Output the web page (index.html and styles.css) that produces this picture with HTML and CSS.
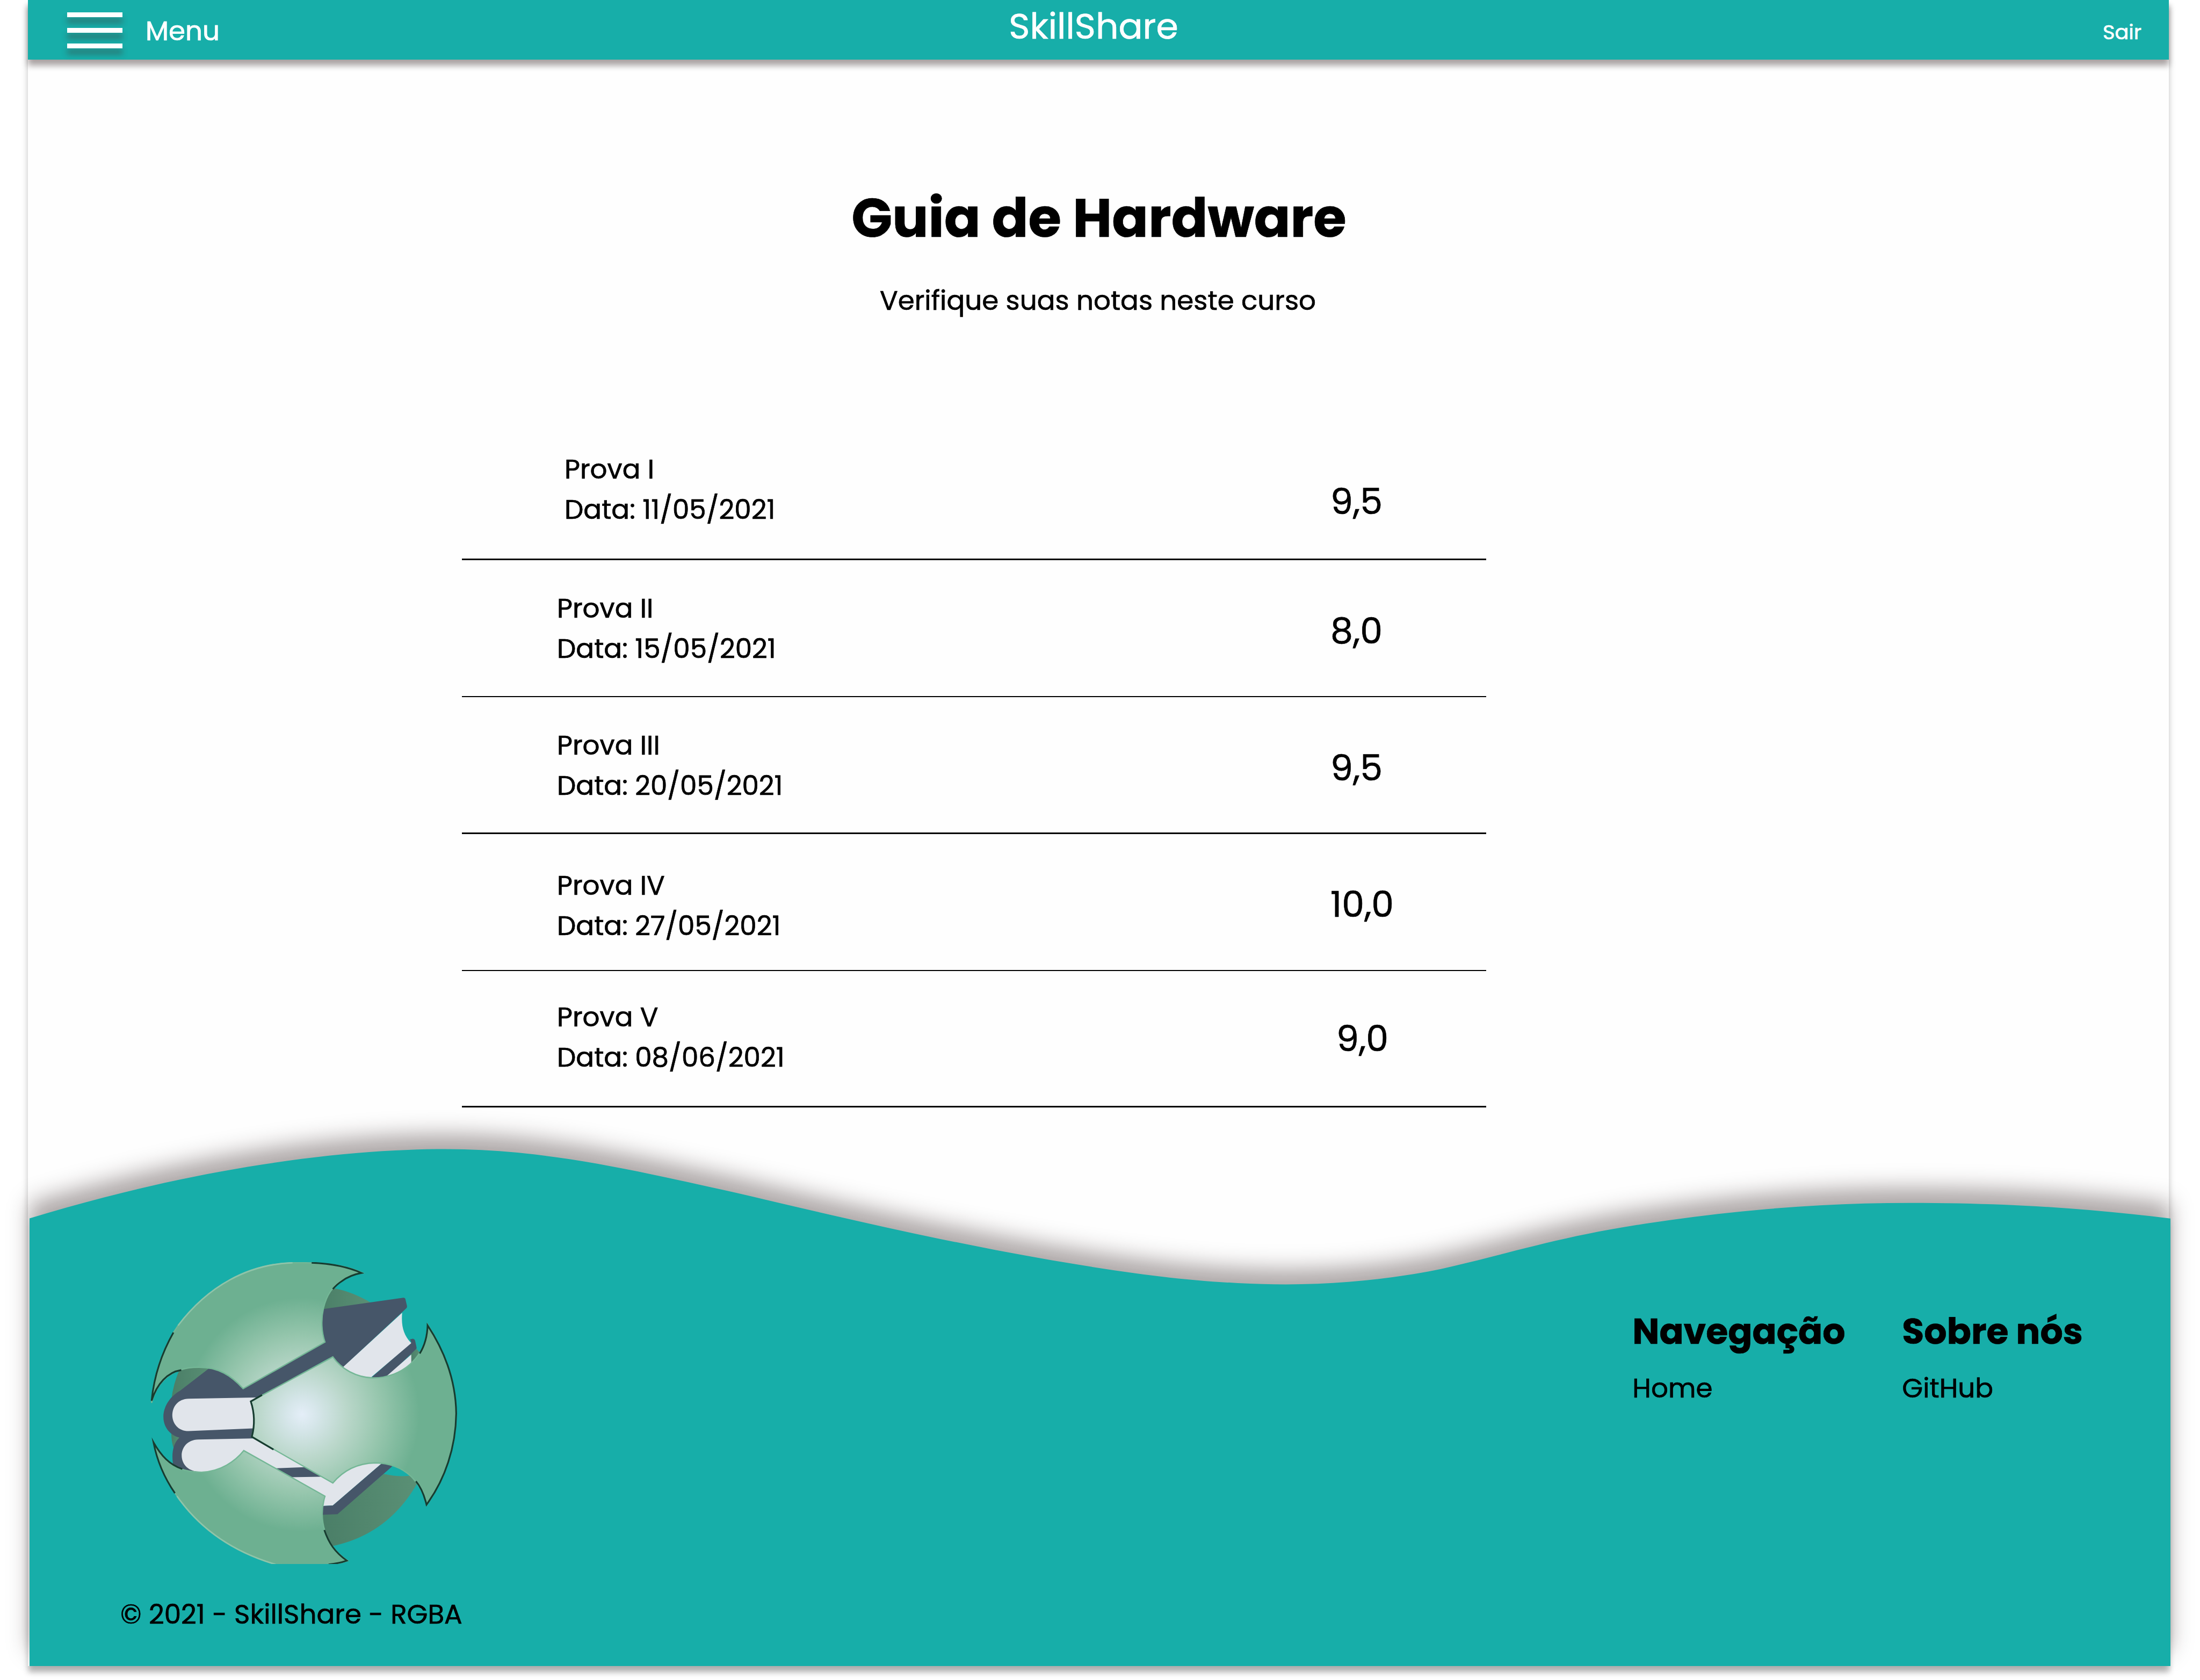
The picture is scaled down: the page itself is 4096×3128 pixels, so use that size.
FILE: index.html
```
<!DOCTYPE html>
<html lang="pt-BR">
<head>
<meta charset="utf-8">
<title>SkillShare - Guia de Hardware</title>
<link rel="stylesheet" href="styles.css">
</head>
<body>
<div class="page">
  <header class="topbar">
    <div class="menu">
      <span class="burger"><i></i><i></i><i></i></span>
      <span class="menu-label">Menu</span>
    </div>
    <div class="brand">SkillShare</div>
    <a class="logout">Sair</a>
  </header>

  <main class="content">
    <h1 class="title">Guia de Hardware</h1>
    <p class="subtitle">Verifique suas notas neste curso</p>
    <section class="grades">
      <div class="exam exam-1">
        <div class="info"><p>Prova I</p><p>Data: 11/05/2021</p></div>
        <div class="grade">9,5</div>
      </div>
      <div class="exam exam-2">
        <div class="info"><p>Prova II</p><p>Data: 15/05/2021</p></div>
        <div class="grade">8,0</div>
      </div>
      <div class="exam exam-3">
        <div class="info"><p>Prova III</p><p>Data: 20/05/2021</p></div>
        <div class="grade">9,5</div>
      </div>
      <div class="exam exam-4">
        <div class="info"><p>Prova IV</p><p>Data: 27/05/2021</p></div>
        <div class="grade">10,0</div>
      </div>
      <div class="exam exam-5">
        <div class="info"><p>Prova V</p><p>Data: 08/06/2021</p></div>
        <div class="grade">9,0</div>
      </div>
    </section>
  </main>

  <footer class="footer">
    <svg class="wave" viewBox="55 2063 3986 1039" aria-hidden="true">
      <path fill="#17aea9" d="M55,2268.6 C320,2187 600,2139.5 830,2139.5 C1010,2139.5 1170,2176 1371,2221 C1600,2275 1860,2336 2112,2370.4 C2210,2384 2310,2391.5 2394,2391.5 C2500,2391.5 2600,2380 2684,2362.6 C2785,2340 2890,2307 3019,2285.5 C3195,2256 3370,2239.8 3557,2239.8 C3740,2239.8 3890,2250 4041,2268.8 V3102 H55 Z"/>
    </svg>
    <div class="about">
      <svg class="logo" viewBox="60 86 1448 1424" aria-hidden="true">
        <defs>
          <radialGradient id="leaf" gradientUnits="userSpaceOnUse" cx="775" cy="805" r="600">
            <stop offset="0" stop-color="#e4eef8"/>
            <stop offset=".12" stop-color="#d6e6ea"/>
            <stop offset=".35" stop-color="#bad7ca"/>
            <stop offset=".62" stop-color="#96c6ad"/>
            <stop offset=".92" stop-color="#6db091"/>
          </radialGradient>
          <linearGradient id="deep" x1="0" y1="0" x2="1" y2="0">
            <stop offset="0" stop-color="#4a7e67"/>
            <stop offset="1" stop-color="#5a9075"/>
          </linearGradient>
        </defs>
        <g fill="url(#deep)">
          <path d="M900,205 L930,210 Q1010,225 1100,277 L860,312Z"/>
          <path d="M200,585 L360,585 L220,720 L158,740 Q166,660 200,585Z"/>
          <path d="M158,890 L210,905 L175,975 L166,955 Q158,925 158,890Z"/>
          <path d="M1160,1085 Q1225,1100 1283,1094 L1318,1130 Q1180,1370 920,1425 L860,1340 L865,1270 L940,1270Z"/>
          <path d="M1285,520 L1315,495 L1335,518 L1285,570Z"/>
        </g>
        <path fill="#465669" d="M850,311 L1252,254 Q1259,253 1262,259 L1270,293 Q1271,300 1265,305 L960,590 L900,540 L590,712 L560,730 L540,920 L300,1100 H212 L166,1038 C158,985 168,940 196,914 C95,885 95,752 200,692 L345,580 L500,640 L883,463Z"/>
        <path fill="#465669" d="M1098,634 L1290,465 L1284,450 L1298,447 Q1306,449 1308,456 L1315,488 Q1316,494 1311,498 L1175,628Z"/>
        <path fill="#e1e5eb" d="M1247,325 C1241,395 1258,435 1290,468 L1095,634 H1040 L965,584Z"/>
        <path fill="#e1e5eb" d="M1290,522 V568 L1230,625 H1172Z"/>
        <path fill="#e1e5eb" d="M240,730 L590,724 L590,868 L240,883 C137,883 137,732 240,730Z"/>
        <path fill="#e1e5eb" d="M285,923 L570,917 L860,1090 L900,1100 L960,1040 L1100,1010 L1152,1034 L920,1234 L860,1237 V1180 L720,1100 L490,1040 L380,1074 H285 C180,1068 182,926 285,923Z"/>
        <path fill="#465669" d="M640,1059 L785,1053 L865,1098 L715,1101Z"/>
        <path fill="#465669" d="M1152,1034 L1205,1045 L942,1275 L860,1278 V1237 L920,1234Z"/>
        <g fill="url(#leaf)" stroke="#74b796" stroke-width="6">
          <path d="M1060,137 C990,105 900,86 730,89 C520,95 330,200 190,385 C130,470 75,600 65,750 C90,650 160,580 290,582 C380,582 440,620 497,683 L883,463 C850,370 870,225 965,172 Q1000,145 1060,137Z"/>
          <path d="M1367,380 C1450,510 1500,650 1502,800 C1500,960 1450,1110 1362,1232 C1345,1150 1280,1035 1120,1033 C1040,1035 970,1068 920,1128 L538,910 Q560,825 533,743 L920,533 C960,590 1030,630 1110,632 C1250,632 1365,530 1367,380Z"/>
          <path d="M72,930 C120,1030 180,1075 300,1077 C390,1075 460,1025 500,975 L883,1190 C850,1300 880,1420 990,1495 Q950,1507 900,1516 L650,1512 C440,1450 290,1340 185,1190 C130,1105 95,1030 72,930Z"/>
        </g>
        <g fill="none" stroke="#8fc4a9" stroke-width="7">
          <path d="M730,89 C520,95 330,200 190,385"/>
          <path d="M650,1512 C440,1450 290,1340 185,1190"/>
        </g>
        <g fill="none" stroke="#173c30" stroke-width="8" stroke-miterlimit="8">
          <path d="M820,89 C920,93 995,110 1055,137 Q1000,147 962,176 Q940,190 920,213"/>
          <path d="M168,418 C110,520 77,620 65,740 C90,660 140,605 205,595"/>
          <path d="M1330,517 Q1365,460 1367,384 C1450,510 1500,650 1502,800 C1500,960 1450,1110 1362,1230 C1352,1190 1338,1150 1312,1120"/>
          <path d="M640,970 L538,910 Q560,825 533,743 L586,713"/>
          <path d="M210,1062 C150,1042 110,1000 74,936 C92,1030 130,1110 175,1176"/>
          <path d="M880,1350 C900,1410 930,1455 986,1494 Q950,1507 900,1512"/>
        </g>
      </svg>
      <p class="copyright">© 2021 - SkillShare - RGBA</p>
    </div>
    <nav class="links">
      <div class="link-group"><h2>Navegação</h2><a>Home</a></div>
      <div class="link-group"><h2>Sobre nós</h2><a>GitHub</a></div>
    </nav>
  </footer>
</div>
</body>
</html>
```
FILE: styles.css
```
* { box-sizing: border-box; }

body {
  margin: 0;
  height: 3128px;
  background: #fff;
  color: #000;
  font: 400 50px/75px "Poppins", "Inter", sans-serif;
  -webkit-text-stroke: .7px currentColor;
  overflow: hidden;
}

h1, h2, p { margin: 0; }

.page {
  width: 3986px;
  height: 3102px;
  margin-left: 52px;
  background: #fefefe;
  box-shadow: 0 11px 11px rgba(0, 0, 0, .25);
}

.topbar {
  height: 111px;
  padding: 0 51px 0 73px;
  display: grid;
  grid-template-columns: 1fr auto 1fr;
  align-items: start;
  background: #17aea9;
  color: #fff;
  box-shadow: 0 11px 11px rgba(20, 0, 0, .36);
}

.menu {
  display: flex;
  align-items: flex-start;
  gap: 43px;
}

.burger {
  width: 103px;
  padding-top: 23px;
  display: grid;
  gap: 20px;
}

.burger i {
  height: 9px;
  background: #fff;
  box-shadow: 0 11px 11px rgba(70, 40, 40, .42);
}

.menu-label { margin-top: 20px; }

.brand {
  margin: -1px 40px 0 0;
  font-size: 66.6px;
  line-height: 100px;
}

.logout {
  justify-self: end;
  margin-top: 31px;
  font-size: 38.3px;
  line-height: 57px;
}

.content { padding-top: 220px; }

.title {
  padding-left: 2px;
  text-align: center;
  font-size: 99.8px;
  line-height: 150px;
  font-weight: 700;
}

.subtitle {
  margin-top: 41px;
  padding-right: 2px;
  text-align: center;
}

.grades {
  width: 1907px;
  margin: 190px 0 0 808px;
}

.exam {
  height: 255px;
  display: grid;
  grid-template-columns: 1617px 1fr;
  border-bottom: 3px solid #000;
}

.exam:first-child { height: 256px; }
.exam:last-child { height: 254px; }

.info { padding: 52px 0 0 177px; }

.grade {
  padding-top: 82px;
  font-size: 66.6px;
  line-height: 100px;
}

.exam-1 .info { padding: 49px 0 0 191px; }
.exam-1 .grade { padding-top: 97px; }
.exam-2, .exam-4 { border-bottom-width: 2px; }
.exam-4 .info { padding-top: 58px; }
.exam-4 .grade { padding-top: 81px; }
.exam-5 .info { padding-top: 48px; }
.exam-5 .grade { padding: 76px 0 0 11px; }

.footer {
  position: relative;
  width: 3986px;
  height: 1040px;
  margin-left: 3px;
  padding: 288px 163px 0 169px;
  display: flex;
  justify-content: space-between;
  align-items: flex-start;
}

/* the wave is the footer's background, its shadow spills over the page */
.wave {
  position: absolute;
  left: 0;
  top: 1px;
  width: 3986px;
  height: 1039px;
  overflow: visible;
  filter: drop-shadow(0 -29px 20px rgba(20, 0, 0, .32)) drop-shadow(0 11px 5px rgba(0, 0, 0, .08));
}

.about, .links { position: relative; }

.logo {
  display: block;
  width: 572px;
  height: 562px;
  margin-left: 56px;
}

.copyright { margin-top: 56px; }

.links {
  padding-top: 79px;
  display: grid;
  grid-template-columns: 502px auto;
}

.link-group h2 {
  margin-bottom: 18px;
  font-size: 66.6px;
  line-height: 100px;
  font-weight: 700;
}

.link-group a { display: block; }
```
